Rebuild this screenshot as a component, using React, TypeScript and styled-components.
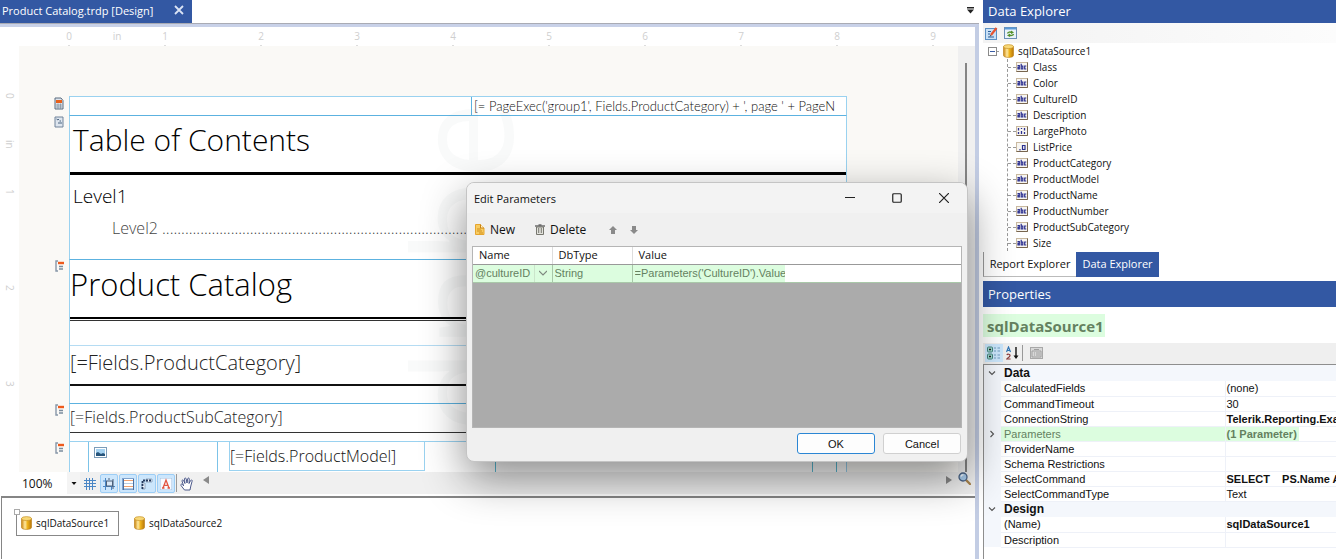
import React from 'react';
import styled, { createGlobalStyle } from 'styled-components';

const BLUE = '#3358a3';
const UI = '"Open Sans", "Noto Sans", sans-serif';
const GRID = '"Liberation Sans", Arial, sans-serif';

const Global = createGlobalStyle`
  * { box-sizing: border-box; }
  body { margin: 0; background: #fff; font-family: ${UI}; font-size: 12px; color: #111; }
  button, select, input { font: inherit; color: inherit; padding: 0; margin: 0; border: 0; background: none; }
  select { appearance: none; }
  ul { list-style: none; margin: 0; padding: 0; }
  h1, h2, h3, p { margin: 0; font-weight: inherit; }
  table { border-collapse: collapse; border-spacing: 0; }
  th { font-weight: inherit; text-align: left; }
  th, td { padding: 0; }
  svg { display: block; flex: none; }
`;

const Shell = styled.div`
  display: grid;
  grid-template-columns: minmax(0, 1fr) 353px;
  column-gap: 4px;
  height: 100vh;
  overflow: hidden;
`;
const DesignerPane = styled.main`
  display: flex;
  flex-direction: column;
  min-width: 0;
  min-height: 0;
`;
const TabStrip = styled.div`
  display: flex;
  justify-content: space-between;
  height: 23px;
  flex: none;
`;
const DocumentTab = styled.div`
  display: flex;
  align-items: center;
  justify-content: space-between;
  width: 192px;
  padding: 0 8px 3px 2px;
  background: ${BLUE};
  color: #fff;
  font-size: 11px;
  white-space: nowrap;
`;
const IconButton = styled.button`
  display: flex;
  align-items: center;
  justify-content: center;
`;
const TabMenu = styled(IconButton)`
  width: 18px;
  height: 20px;
`;
const Frame = styled.div`
  display: flex;
  flex-direction: column;
  flex: 1;
  min-height: 0;
  border-top: 3px solid #c8d1e8;
  border-right: 4px solid #c3cde4;
  box-shadow: 0 -1px 0 #a9abb4;
  margin-top: 1px;
`;
const TopRuler = styled.div`
  display: flex;
  height: 19px;
  flex: none;
  padding-left: 45px;
  overflow: hidden;
`;
const RulerCell = styled.span<{ $tick?: boolean }>`
  display: flex;
  flex: none;
  flex-direction: column;
  align-items: center;
  justify-content: space-between;
  width: 48px;
  color: #cfcfcf;
  font-size: 10px;
  line-height: 18px;
  &::after { content: ''; width: 2px; height: 1px; background: ${p => (p.$tick ? '#ddd' : 'transparent')}; }
`;
const SideRuler = styled.div`
  display: flex;
  flex-direction: column;
  width: 19px;
  flex: none;
  padding-top: 26px;
  overflow: hidden;
`;
const SideCell = styled(RulerCell)`
  flex-direction: row;
  width: 19px;
  height: 48px;
  line-height: 17px;
  writing-mode: vertical-rl;
  justify-content: center;
  &::after { display: none; }
`;
const Workspace = styled.div`
  display: flex;
  flex: 1;
  min-height: 0;
`;
const Canvas = styled.section`
  position: relative;
  flex: 1;
  min-width: 0;
  padding-top: 50px;
  background: #faf9f6;
  overflow: hidden;
`;
const Watermark = styled.div`
  position: absolute;
  left: 346px;
  top: 56px;
  writing-mode: vertical-rl;
  transform: rotate(180deg);
  font-size: 138px;
  line-height: 188px;
  color: rgba(60, 100, 90, 0.03);
  pointer-events: none;
  white-space: nowrap;
`;
const VScroll = styled.div`
  display: flex;
  justify-content: center;
  width: 17px;
  flex: none;
  padding: 17px 2px 0 0;
  background: #f0f0f0;
  &::before { content: ''; width: 2px; background: #858585; }
`;
const Section = styled.div<{ $h: number }>`
  display: flex;
  height: ${p => p.$h}px;
`;
const Gutter = styled.div`
  display: flex;
  justify-content: flex-end;
  align-items: flex-start;
  width: 50px;
  flex: none;
  padding: 1px 5px 0 0;
`;
const Band = styled.div<{ $edge?: string }>`
  width: 778px;
  flex: none;
  background: #fff;
  border: solid #9ad2f0;
  border-width: 1px 1px 0;
  border-top-color: ${p => p.$edge || '#5cb2e0'};
  overflow: hidden;
`;
const HeaderBand = styled(Band)`
  display: flex;
  justify-content: flex-end;
`;
const PageExpr = styled.p`
  width: 375px;
  padding-left: 2px;
  border-left: 1px solid #5cb2e0;
  font-family: Lato, ${UI};
  font-size: 13px;
  line-height: 18px;
  font-weight: 300;
  white-space: nowrap;
`;
const Heading = styled.h1<{ $size: number; $indent?: number; $double?: boolean }>`
  height: 59px;
  padding-left: ${p => p.$indent || 0}px;
  border-bottom: ${p => (p.$double ? 2 : 3)}px solid #000;
  box-shadow: ${p => (p.$double ? '0 1px 0 #fff, 0 2px 0 #333' : 'none')};
  font-size: ${p => p.$size}px;
  line-height: 48px;
  font-weight: 300;
  color: #000;
`;
const TocOne = styled.h2`
  padding: 7px 0 0 3px;
  font-size: 19px;
  line-height: 28px;
  font-weight: 300;
  color: #000;
`;
const TocTwo = styled.h3`
  padding: 4px 0 0 42px;
  font-size: 16px;
  line-height: 28px;
  font-weight: 300;
  color: #444;
  white-space: nowrap;
`;
const FieldBox = styled.p<{ $h: number; $size: number; $gap?: number; $line?: string }>`
  height: ${p => p.$h}px;
  margin-top: ${p => p.$gap || 0}px;
  border-top: ${p => (p.$gap ? '1px solid #b5dcf3' : '0')};
  border-bottom: ${p => p.$line};
  font-size: ${p => p.$size}px;
  line-height: ${p => (p.$gap ? 34 : 27)}px;
  font-weight: 300;
  color: #222;
`;
const DetailBand = styled(Band)`
  display: flex;
  align-items: flex-start;
`;
const PictureBox = styled.div`
  width: 130px;
  height: 40px;
  margin-left: 18px;
  padding: 5px 0 0 5px;
  border: solid #7cc3e8;
  border-width: 0 1px;
`;
const ModelBox = styled.p`
  width: 196px;
  margin-left: 11px;
  border: 1px solid #9ad2f0;
  border-top: 0;
  font-size: 16px;
  line-height: 28px;
  font-weight: 300;
  white-space: nowrap;
`;
const DetailCell = styled.div<{ $w: number }>`
  width: ${p => p.$w}px;
  height: 40px;
  border-right: 1px solid #5bbcd6;
`;
const ViewBar = styled.div`
  display: flex;
  height: 22px;
  flex: none;
  margin-left: 19px;
  background: #f0f0f0;
`;
const ZoomBox = styled.label`
  display: flex;
  align-items: center;
  width: 61px;
  background: #fff;
  select { width: 48px; height: 22px; padding-left: 3px; font-size: 12px; }
`;
const ZoomArrow = styled.span`
  display: flex;
  align-items: center;
  justify-content: center;
  width: 13px;
  height: 22px;
  background: #f4f4f4;
`;
const ViewButton = styled(IconButton)<{ $on?: boolean }>`
  width: 18px;
  height: 19px;
  margin: 2px 0 0 1px;
  border: 1px solid ${p => (p.$on ? '#9ccdf5' : 'transparent')};
  border-radius: 2px;
  background: ${p => (p.$on ? '#cce6fc' : 'transparent')};
`;
const PreviewButton = styled(IconButton)`
  width: 22px;
  height: 13px;
`;
const BarDivider = styled.span<{ $h: number; $m: string }>`
  width: 1px;
  height: ${p => p.$h}px;
  margin: ${p => p.$m};
  background: #999;
`;
const HScroll = styled.div`
  display: flex;
  flex: 1;
  justify-content: space-between;
  align-items: center;
  height: 16px;
  margin-left: 6px;
`;
const Tray = styled.div`
  display: flex;
  gap: 10px;
  height: 63px;
  flex: none;
  margin: 2px 0 0 1px;
  padding: 13px 14px;
  border-top: 2px solid #858585;
  border-left: 1px solid #858585;
`;
const TrayItem = styled.button<{ $on?: boolean }>`
  position: relative;
  display: flex;
  align-items: center;
  gap: 4px;
  height: 25px;
  width: 103px;
  padding: 0 0 2px 4px;
  border: 1px solid ${p => (p.$on ? '#888' : 'transparent')};
  font-size: 10px;
  white-space: nowrap;
  &::before {
    content: '';
    display: ${p => (p.$on ? 'block' : 'none')};
    position: absolute;
    left: -3px;
    top: -3px;
    width: 4px;
    height: 4px;
    border: 1px solid #aaa;
    background: #fff;
  }
`;

const SidePane = styled.aside`
  display: flex;
  flex-direction: column;
  min-height: 0;
`;
const PaneTitle = styled.h2<{ $h: number }>`
  height: ${p => p.$h}px;
  flex: none;
  padding-left: 5px;
  background: ${BLUE};
  color: #fff;
  font-size: 13px;
  line-height: ${p => p.$h}px;
`;
const ExplorerBar = styled.div`
  display: flex;
  gap: 6px;
  height: 20px;
  flex: none;
  padding: 3px 2px;
  background: linear-gradient(90deg, #f3f3f3, #fcfcfc);
`;
const TreeBox = styled.div`
  flex: 1;
  min-height: 0;
  overflow: hidden;
  font-size: 10px;
`;
const RootNode = styled.div`
  display: flex;
  align-items: center;
  height: 16px;
  padding-left: 5px;
  gap: 4px;
`;
const FieldList = styled.ul`
  margin-left: 24px;
  border-left: 1px dashed #999;
`;
const FieldItem = styled.li`
  display: flex;
  align-items: center;
  gap: 5px;
  height: 16px;
  &::before { content: ''; width: 8px; margin-right: -5px; border-top: 1px dashed #999; }
`;
const PaneTabs = styled.div`
  display: flex;
  height: 25px;
  flex: none;
  margin-bottom: 4px;
`;
const PaneTab = styled.button<{ $on?: boolean }>`
  width: ${p => (p.$on ? 83 : 93)}px;
  padding-bottom: 2px;
  border-left: ${p => (p.$on ? 0 : 1)}px solid #999;
  border-bottom: ${p => (p.$on ? 0 : 1)}px solid #bbb;
  background: ${p => (p.$on ? BLUE : '#fff')};
  color: ${p => (p.$on ? '#fff' : '#111')};
  font-size: 11px;
  white-space: nowrap;
`;
const ObjectName = styled.div`
  height: 36px;
  flex: none;
  padding-top: 7px;
`;
const Mark = styled.span`
  display: inline-block;
  height: 23px;
  padding: 0 1px 0 4px;
  background: #dcfddf;
  color: #64815f;
  font-weight: 700;
  font-size: 15px;
  line-height: 24px;
`;
const PropsBar = styled.div`
  display: flex;
  align-items: center;
  height: 21px;
  flex: none;
  padding: 0 0 1px 2px;
  background: #efefef;
`;
const SortButton = styled(IconButton)<{ $on?: boolean }>`
  width: 18px;
  height: 18px;
  background: ${p => (p.$on ? '#cbe6fb' : 'transparent')};
`;
const PropsBox = styled.div`
  height: 195px;
  flex: none;
  border: solid #8e8e8e;
  border-width: 1px 0 0 1px;
  overflow: hidden;
`;
const PropsTable = styled.table`
  width: 100%;
  table-layout: fixed;
  font-family: ${GRID};
  font-size: 11px;
  color: #111;
  td, th { height: 15px; line-height: 14px; white-space: nowrap; overflow: hidden; }
`;
const GroupRow = styled.tr`
  background: #f4f7fc;
  font-weight: 700;
  font-size: 12px;
  && th { height: 16px; padding-left: 3px; }
`;
const Pip = styled.td`
  width: 17px;
  background: #f4f7fc;
  svg { margin-left: 4px; }
`;
const PropRow = styled.tr<{ $hit?: boolean }>`
  color: ${p => (p.$hit ? '#64815f' : 'inherit')};
  th, td:last-child { border-bottom: 1px solid #eef1f8; }
  th { padding-left: 3px; background: ${p => (p.$hit ? '#dcfddf' : 'transparent')}; }
`;
const PropValue = styled.td<{ $bold?: boolean }>`
  border-left: 1px solid #eef1f8;
  font-weight: ${p => (p.$bold ? 700 : 400)};
  white-space: pre !important;
`;
const ValueText = styled.span<{ $hit?: boolean }>`
  display: inline-block;
  padding: 0 2px 0 1px;
  background: ${p => (p.$hit ? '#dcfddf' : 'transparent')};
`;

const Dialog = styled.div`
  position: absolute;
  left: 466px;
  top: 182px;
  width: 502px;
  height: 280px;
  display: flex;
  flex-direction: column;
  border: 1px solid #c4c4c4;
  border-radius: 8px;
  background: #f0f0f0;
  box-shadow: 0 16px 44px rgba(0, 0, 0, 0.46);
  overflow: hidden;
`;
const DialogTitle = styled.div`
  display: flex;
  align-items: center;
  height: 30px;
  flex: none;
  padding-left: 7px;
  background: #f3f3f3;
  h2 { flex: 1; font-size: 11px; }
`;
const CaptionButton = styled(IconButton)`
  width: 47px;
  height: 30px;
`;
const DialogBar = styled.div`
  display: flex;
  align-items: center;
  height: 33px;
  flex: none;
  padding-left: 8px;
`;
const ToolButton = styled.button<{ $w: number }>`
  display: flex;
  align-items: center;
  gap: 5px;
  width: ${p => p.$w}px;
  height: 22px;
  font-size: 12px;
`;
const ParamArea = styled.div`
  flex: 1;
  margin: 0 5px 0 5px;
  border: 1px solid #b5b5b5;
  background: #ababab;
`;
const ParamTable = styled.table`
  width: 100%;
  table-layout: fixed;
  background: #fff;
  th { height: 17px; padding: 0 0 1px 6px; font-size: 11px; line-height: 15px; border-right: 1px solid #ddd; border-bottom: 1px solid #999; }
  th:last-child, td:last-child { border-right: 0; }
  td { height: 18px; font-family: ${GRID}; font-size: 11px; color: #64815f; background: #dcfddf;
    border-right: 1px solid #a9c8a9; border-bottom: 1px solid #a9c8a9; }
  td:last-child { background: #fff; }
`;
const NameCombo = styled.label`
  display: flex;
  align-items: center;
  select { width: 62px; height: 17px; padding-left: 2px; border-right: 1px solid #cbe5cb; }
  svg { margin-left: 4px; opacity: 0.7; }
`;
const CellInput = styled.input<{ $w: number }>`
  width: ${p => p.$w}px;
  height: 17px;
  padding-left: 2px;
  background: #dcfddf;
  display: block;
`;
const DialogFoot = styled.div`
  display: flex;
  justify-content: flex-end;
  gap: 8px;
  height: 33px;
  flex: none;
  padding: 5px 6px 0;
`;
const FootButton = styled.button<{ $main?: boolean }>`
  width: 78px;
  height: 21px;
  border: 1px solid ${p => (p.$main ? '#2b86d4' : '#d0d0d0')};
  border-radius: 3px;
  background: #fdfdfd;
  font-family: ${GRID};
  font-size: 11px;
`;

const Cylinder = () => (
  <svg width="11" height="14" viewBox="0 0 11 14">
    <defs>
      <linearGradient id="gold" x1="0" x2="1">
        <stop offset="0" stopColor="#c9820a" /><stop offset=".35" stopColor="#ffe9a0" />
        <stop offset=".6" stopColor="#eeb21b" /><stop offset="1" stopColor="#b9770a" />
      </linearGradient>
    </defs>
    <path d="M.5 2.500v9c0 2.600 10 2.600 10 0v-9z" fill="url(#gold)" stroke="#b97c12" strokeWidth=".6" />
    <ellipse cx="5.500" cy="2.600" rx="5" ry="2" fill="#f8d877" stroke="#c08a20" strokeWidth=".6" />
  </svg>
);
const TypeIcon = ({ kind }: { kind: string }) => (
  <svg width="12" height="10" viewBox="0 0 12 10">
    <rect x=".5" y=".5" width="11" height="9" fill="#f7f5f0" stroke="#c9b9a0" />
    <path d="M.5 9.500h11v-9" fill="none" stroke="#77654f" />
    {kind === 'abc' && <path d="M1.500 3.500h1.800v3.500H2V5.200h1.300M5.200 1.800V7h1.600V4H5.200M10.300 4H8.700v3h1.600" fill="none" stroke="#2b2f8f" strokeWidth="1.200" />}
    {kind === 'bin' && <path d="M2.500 2v2.500M5.500 2v1M8.500 2v2.500M2.500 6v2M5.500 5v3M8.500 6v2" stroke="#2b2f8f" strokeWidth="1.300" />}
    {kind === 'num' && <path d="M4 7v1.500M6.500 3.500h2.500v4H6.500z" fill="none" stroke="#2b2f8f" strokeWidth="1.200" />}
  </svg>
);
const SectionIcon = () => (
  <svg width="9" height="12" viewBox="0 0 9 12">
    <path d="M3 1H1v10h2" fill="none" stroke="#8797a8" strokeWidth="1.400" />
    <path d="M3 3h6" stroke="#ee5a1c" strokeWidth="2.400" />
    <path d="M4 6.500h4M4 9h4" stroke="#7b8c9d" strokeWidth="1.300" />
  </svg>
);
const PageIcon = () => (
  <svg width="10" height="13" viewBox="0 0 10 13">
    <path d="M1 1h6l2 2.500V12H1z" fill="#dfe5ec" stroke="#5b6d80" />
    <path d="M2 3h6v3H2z" fill="#e8601a" />
    <path d="M2 8h6M2 10h6M4 6.500V12M6.500 6.500V12" stroke="#7d8c9c" strokeWidth=".7" />
  </svg>
);
const TocIcon = () => (
  <svg width="10" height="12" viewBox="0 0 10 12">
    <path d="M1 1h8v10H1z" fill="#dde5ee" stroke="#71839a" />
    <path d="M2.500 3l1.500 1 1-1M5.500 5H7M4 7h4" fill="none" stroke="#4b6480" />
  </svg>
);
const PictureIcon = () => (
  <svg width="13" height="11" viewBox="0 0 13 11">
    <rect x=".5" y=".5" width="12" height="10" fill="#fff" stroke="#7d9cb8" />
    <rect x="2" y="2" width="9" height="7" fill="#a6d3f2" />
    <path d="M2 9V6l2-1 3 2 2-1 2 1v2z" fill="#27557c" />
  </svg>
);
const Triangle = ({ d, fill = '#8a8a8a' }: { d: string; fill?: string }) => (
  <svg width="8" height="8" viewBox="0 0 8 8"><path d={d} fill={fill} /></svg>
);
const Chevron = ({ d }: { d: string }) => (
  <svg width="8" height="8" viewBox="0 0 8 8"><path d={d} fill="none" stroke="#555" strokeWidth="1.100" /></svg>
);

const viewTools = [
  { label: 'Show grid', on: false, art: <path d="M0 2.500h12M0 5.500h12M0 8.500h12M2.500 0v12M5.500 0v12M8.500 0v12" stroke="#4a86c5" strokeWidth="1" /> },
  { label: 'Snap to grid', on: true, art: <><path d="M0 8.500h12M2.500 0v12M8.500 6v6M0 3h2" stroke="#4a86c5" /><rect x="3.500" y="3" width="6" height="5" fill="#dbe9f7" stroke="#4b5f78" /><path d="M10 1v10M6 0v2" stroke="#4b5f78" /></> },
  { label: 'Snap lines', on: true, art: <><rect x=".5" y=".5" width="11" height="11" fill="#fff" stroke="#7fa3cf" /><path d="M2 2.500h9M2 8.500h9" stroke="#efa06f" /><path d="M2 5.500h9M2 10.500h9" stroke="#b9cbe0" /><path d="M11.500 1v11M1.500 1v11" stroke="#4d6f9f" /></> },
  { label: 'Dimensions', on: true, art: <><path d="M1 11V5h3v6zM5 1h6v3H5z" fill="#f5f9ff" stroke="#8299b5" strokeWidth=".8" /><path d="M1.500 11V2.500H11" fill="none" stroke="#25395c" strokeDasharray="2 1" strokeWidth="1.800" /></> },
  { label: 'Style text', on: true, art: <><path d="M0 0h12v12H0z" fill="#f7faff" stroke="#a3bfdf" /><path d="M3 10l3-8 3 8M4 7.300h4M2 10h2.500M7.500 10H10" fill="none" stroke="#e25542" strokeWidth="1.300" /></> },
];

const fields: [string, string][] = [
  ['Class', 'abc'], ['Color', 'abc'], ['CultureID', 'abc'], ['Description', 'abc'], ['LargePhoto', 'bin'],
  ['ListPrice', 'num'], ['ProductCategory', 'abc'], ['ProductModel', 'abc'], ['ProductName', 'abc'],
  ['ProductNumber', 'abc'], ['ProductSubCategory', 'abc'], ['Size', 'abc'],
];

type Prop = { name: string; value: string; bold?: boolean; hit?: boolean };
const groups: { title: string; rows: Prop[] }[] = [
  { title: 'Data', rows: [
    { name: 'CalculatedFields', value: '(none)' },
    { name: 'CommandTimeout', value: '30' },
    { name: 'ConnectionString', value: 'Telerik.Reporting.Exa', bold: true },
    { name: 'Parameters', value: '(1 Parameter)', bold: true, hit: true },
    { name: 'ProviderName', value: '' },
    { name: 'Schema Restrictions', value: '' },
    { name: 'SelectCommand', value: 'SELECT    PS.Name A', bold: true },
    { name: 'SelectCommandType', value: 'Text' },
  ] },
  { title: 'Design', rows: [
    { name: '(Name)', value: 'sqlDataSource1', bold: true },
    { name: 'Description', value: '' },
  ] },
];

const topMarks = ['0', 'in', '1', '', '2', '', '3', '', '4', '', '5', '', '6', '', '7', '', '8', '', '9'];
const sideMarks = ['0', 'in', '1', '', '2', '', '3', ''];

const Designer = () => (
  <DesignerPane>
    <TabStrip>
      <DocumentTab>
        Product Catalog.trdp [Design]
        <IconButton aria-label="Close document">
          <svg width="10" height="10" viewBox="0 0 10 10"><path d="M1 1l8 8M9 1l-8 8" stroke="#dbe4f5" strokeWidth="1.800" /></svg>
        </IconButton>
      </DocumentTab>
      <TabMenu aria-label="Open documents">
        <svg width="7" height="7" viewBox="0 0 7 7"><path d="M0 0h7v1.500H0zM0 2.500h7L3.500 6.500z" fill="#222" /></svg>
      </TabMenu>
    </TabStrip>
    <Frame>
      <TopRuler>{topMarks.map((m, i) => <RulerCell key={i} $tick={i % 2 === 0}>{m}</RulerCell>)}</TopRuler>
      <Workspace>
        <SideRuler>{sideMarks.map((m, i) => <SideCell key={i}>{m}</SideCell>)}</SideRuler>
        <Canvas>
          <Section $h={19}>
            <Gutter><PageIcon /></Gutter>
            <HeaderBand $edge="#9ad2f0"><PageExpr>[= PageExec('group1', Fields.ProductCategory) + ', page ' + PageN</PageExpr></HeaderBand>
          </Section>
          <Section $h={144}>
            <Gutter><TocIcon /></Gutter>
            <Band>
              <Heading $size={30} $indent={3}>Table of Contents</Heading>
              <TocOne>Level1</TocOne>
              <TocTwo>Level2 {'.'.repeat(80)}</TocTwo>
            </Band>
          </Section>
          <Section $h={144}>
            <Gutter><SectionIcon /></Gutter>
            <Band>
              <Heading $size={31} $double>Product Catalog</Heading>
              <FieldBox $h={41} $gap={26} $size={20} $line="2px solid #111">[=Fields.ProductCategory]</FieldBox>
            </Band>
          </Section>
          <Section $h={38}>
            <Gutter><SectionIcon /></Gutter>
            <Band><FieldBox $h={29} $size={16} $line="1px solid #333">[=Fields.ProductSubCategory]</FieldBox></Band>
          </Section>
          <Section $h={60}>
            <Gutter><SectionIcon /></Gutter>
            <DetailBand $edge="#9ad2f0">
              <PictureBox><PictureIcon /></PictureBox>
              <ModelBox>[=Fields.ProductModel]</ModelBox>
              <DetailCell $w={71} />
              <DetailCell $w={317} />
              <DetailCell $w={24} />
            </DetailBand>
          </Section>
          <Watermark aria-hidden="true">dnbe</Watermark>
        </Canvas>
        <VScroll />
      </Workspace>
      <ViewBar>
        <ZoomBox>
          <select aria-label="Zoom"><option>100%</option></select>
          <ZoomArrow><Triangle d="M1.500 3h5L4 6z" fill="#111" /></ZoomArrow>
        </ZoomBox>
        {viewTools.map(t => (
          <ViewButton key={t.label} $on={t.on} aria-label={t.label}>
            <svg width="12" height="12" viewBox="0 0 12 12" fill="none">{t.art}</svg>
          </ViewButton>
        ))}
        <BarDivider $h={18} $m="2px 0 0 1px" />
        <ViewButton aria-label="Pan">
          <svg width="14" height="14" viewBox="0 0 14 14">
            <path d="M4.500 13L1 8.500C.3 7.300 1.800 6.600 2.600 7.600L3.600 8.800 2 4c-.2-1.200 1.200-1.500 1.600-.4L5 6.500 4.500 2c0-1.300 1.500-1.300 1.700 0L7 6l.7-4.200c.2-1.200 1.700-1 1.600.3L9 6.500l1.600-3c.6-1 1.900-.5 1.500.7L10.800 9 10 13z" fill="#fff" stroke="#3b4a80" strokeWidth=".9" />
          </svg>
        </ViewButton>
        <HScroll>
          <IconButton aria-label="Scroll left"><Triangle d="M7 0v8L1 4z" /></IconButton>
          <IconButton aria-label="Scroll right"><Triangle d="M1 0v8l6-4z" /></IconButton>
        </HScroll>
        <PreviewButton aria-label="Zoom preview">
          <svg width="13" height="13" viewBox="0 0 13 13">
            <path d="M8 8l4 4" stroke="#a8834c" strokeWidth="2.400" strokeLinecap="round" />
            <circle cx="5" cy="5" r="4" fill="#a9cdee" stroke="#4a6386" strokeWidth="1.300" />
            <path d="M3 4.500C3.300 3.300 4.200 2.800 5.500 3" fill="none" stroke="#fff" strokeWidth="1.200" />
          </svg>
        </PreviewButton>
      </ViewBar>
      <Tray>
        <TrayItem $on><Cylinder />sqlDataSource1</TrayItem>
        <TrayItem><Cylinder />sqlDataSource2</TrayItem>
      </Tray>
    </Frame>
  </DesignerPane>
);

const Explorer = () => (
  <>
    <PaneTitle $h={23}>Data Explorer</PaneTitle>
    <ExplorerBar>
      <IconButton aria-label="Configure data source">
        <svg width="13" height="13" viewBox="0 0 13 13">
          <rect x=".5" y="1.500" width="11" height="11" fill="#c8e0f6" stroke="#5a8fc4" />
          <path d="M3 4.500h3M3 7h2M3 10h6" stroke="#2c5f98" />
          <path d="M6 8l5.500-7" stroke="#e8532f" strokeWidth="2.200" /><path d="M5 9.500L6 8" stroke="#444" />
        </svg>
      </IconButton>
      <IconButton aria-label="Refresh">
        <svg width="13" height="12" viewBox="0 0 13 12">
          <rect x=".5" y=".5" width="12" height="11" fill="#eaf3fb" stroke="#6b8fb5" /><path d="M1 1.500h11" stroke="#5b9bd8" strokeWidth="2" />
          <path d="M3.500 6.500C4 5 6 4.500 8 5.500M9.500 7C9 8.500 7 9 5 8" fill="none" stroke="#55912b" strokeWidth="1.400" />
          <path d="M7 3.500l3 2-3 1.500zM6 6.500L3 8.500l3 1.500z" fill="#55912b" />
        </svg>
      </IconButton>
    </ExplorerBar>
    <TreeBox>
      <RootNode>
        <svg width="11" height="9" viewBox="0 0 11 9"><rect x=".5" y=".5" width="8" height="8" fill="#fff" stroke="#8a8a8a" /><path d="M2 4.500h5" stroke="#3b5da5" /><path d="M9 4.500h2" stroke="#999" /></svg>
        <Cylinder />
        sqlDataSource1
      </RootNode>
      <FieldList>{fields.map(([n, k]) => <FieldItem key={n}><TypeIcon kind={k} />{n}</FieldItem>)}</FieldList>
    </TreeBox>
    <PaneTabs>
      <PaneTab>Report Explorer</PaneTab>
      <PaneTab $on>Data Explorer</PaneTab>
    </PaneTabs>
  </>
);

const Properties = () => (
  <>
    <PaneTitle $h={26}>Properties</PaneTitle>
    <ObjectName><Mark>sqlDataSource1</Mark></ObjectName>
    <PropsBar>
      <SortButton $on aria-label="Categorized">
        <svg width="14" height="14" viewBox="0 0 14 14">
          <rect x=".5" y="1" width="5" height="5" rx="1" fill="#9fd8cf" stroke="#44847d" /><rect x=".5" y="8" width="5" height="5" rx="1" fill="#9fd8cf" stroke="#44847d" />
          <path d="M2 3.500h2M2 10.500h2" stroke="#222" strokeWidth="1.600" />
          <path d="M7 2h2M10.500 2h2.500M7 5h2M10.500 5h2.500M7 9h2M10.500 9h2.500M7 12h2M10.500 12h2.500" stroke="#6f9dbf" />
        </svg>
      </SortButton>
      <SortButton aria-label="Alphabetical">
        <svg width="13" height="14" viewBox="0 0 13 14">
          <path d="M.5 6L2.500 1l2 5M1.300 4.500h2.400" fill="none" stroke="#2f74b5" strokeWidth="1.200" />
          <path d="M.8 9C1.500 7.800 4.200 8 4 9.600 3.800 11 1.500 11.800.8 13h3.800" fill="none" stroke="#8c3c3c" strokeWidth="1.200" />
          <path d="M10 1v10" stroke="#111" strokeWidth="1.400" /><path d="M7.500 9.500h5L10 13z" fill="#111" />
        </svg>
      </SortButton>
      <BarDivider $h={16} $m="0 4px 0 1px" />
      <SortButton disabled aria-label="Property pages">
        <svg width="13" height="12" viewBox="0 0 13 12">
          <rect x=".5" y=".5" width="12" height="11" fill="#d8d8d8" stroke="#a8a8a8" /><path d="M2 4h9v6H2zM4 2.500h5M4 6h1M6 6h4M4 8h1M6 8h4" fill="none" stroke="#a0a0a0" />
        </svg>
      </SortButton>
    </PropsBar>
    <PropsBox>
      <PropsTable>
        <colgroup><col width="17" /><col width="224" /><col /></colgroup>
        {groups.map(g => (
          <tbody key={g.title}>
            <GroupRow><Pip><Chevron d="M1 2.500l3 3 3-3" /></Pip><th colSpan={2} scope="rowgroup">{g.title}</th></GroupRow>
            {g.rows.map(r => (
              <PropRow key={r.name} $hit={r.hit}>
                <Pip>{r.hit && <Chevron d="M2.500 1l3 3-3 3" />}</Pip>
                <th scope="row">{r.name}</th>
                <PropValue $bold={r.bold}><ValueText $hit={r.hit}>{r.value}</ValueText></PropValue>
              </PropRow>
            ))}
          </tbody>
        ))}
      </PropsTable>
    </PropsBox>
  </>
);

const EditParameters = () => (
  <Dialog role="dialog" aria-label="Edit Parameters">
    <DialogTitle>
      <h2>Edit Parameters</h2>
      <CaptionButton aria-label="Minimize"><svg width="10" height="10" viewBox="0 0 10 10"><path d="M0 4.500h10" stroke="#222" /></svg></CaptionButton>
      <CaptionButton aria-label="Maximize"><svg width="10" height="10" viewBox="0 0 10 10"><rect x=".75" y=".75" width="8.500" height="8.500" rx="1" fill="none" stroke="#222" strokeWidth="1.200" /></svg></CaptionButton>
      <CaptionButton aria-label="Close"><svg width="10" height="10" viewBox="0 0 10 10"><path d="M0 0l10 10M10 0L0 10" stroke="#222" strokeWidth="1.200" /></svg></CaptionButton>
    </DialogTitle>
    <DialogBar>
      <ToolButton $w={60}>
        <svg width="10" height="11" viewBox="0 0 10 11"><path d="M.5 .5h5L9 4v6.500H.5z" fill="#f8cc62" stroke="#e6a52e" /><path d="M5.500 .5V4H9" fill="#fff3cf" stroke="#c98312" /><path d="M2 5h4M2 7h5M4 9h4" stroke="#cf8f1c" /></svg>
        New
      </ToolButton>
      <ToolButton $w={74}>
        <svg width="10" height="11" viewBox="0 0 10 11"><path d="M0 2h10M3.500 1h3" stroke="#6d6d6d" strokeWidth="1.400" /><path d="M1.500 3h7v7.500h-7z" fill="#e2e2dc" stroke="#77776f" /><path d="M3.700 4v5M6.300 4v5" stroke="#77776f" /></svg>
        Delete
      </ToolButton>
      <ToolButton $w={21} aria-label="Move up"><Triangle d="M4 0l4 4H6v4H2V4H0z" /></ToolButton>
      <ToolButton $w={21} aria-label="Move down"><Triangle d="M4 8l4-4H6V0H2v4H0z" /></ToolButton>
    </DialogBar>
    <ParamArea>
      <ParamTable>
        <colgroup><col width="79" /><col width="80" /><col /></colgroup>
        <thead><tr><th>Name</th><th>DbType</th><th>Value</th></tr></thead>
        <tbody>
          <tr>
            <td><NameCombo><select aria-label="Name"><option>@cultureID</option></select><Chevron d="M0 2l4 4 4-4" /></NameCombo></td>
            <td><CellInput $w={78} aria-label="DbType" defaultValue="String" /></td>
            <td><CellInput $w={152} aria-label="Value" defaultValue="=Parameters('CultureID').Value" /></td>
          </tr>
        </tbody>
      </ParamTable>
    </ParamArea>
    <DialogFoot>
      <FootButton $main>OK</FootButton>
      <FootButton>Cancel</FootButton>
    </DialogFoot>
  </Dialog>
);

export default function App() {
  return (
    <>
      <Global />
      <Shell>
        <Designer />
        <SidePane>
          <Explorer />
          <Properties />
        </SidePane>
      </Shell>
      <EditParameters />
    </>
  );
}
